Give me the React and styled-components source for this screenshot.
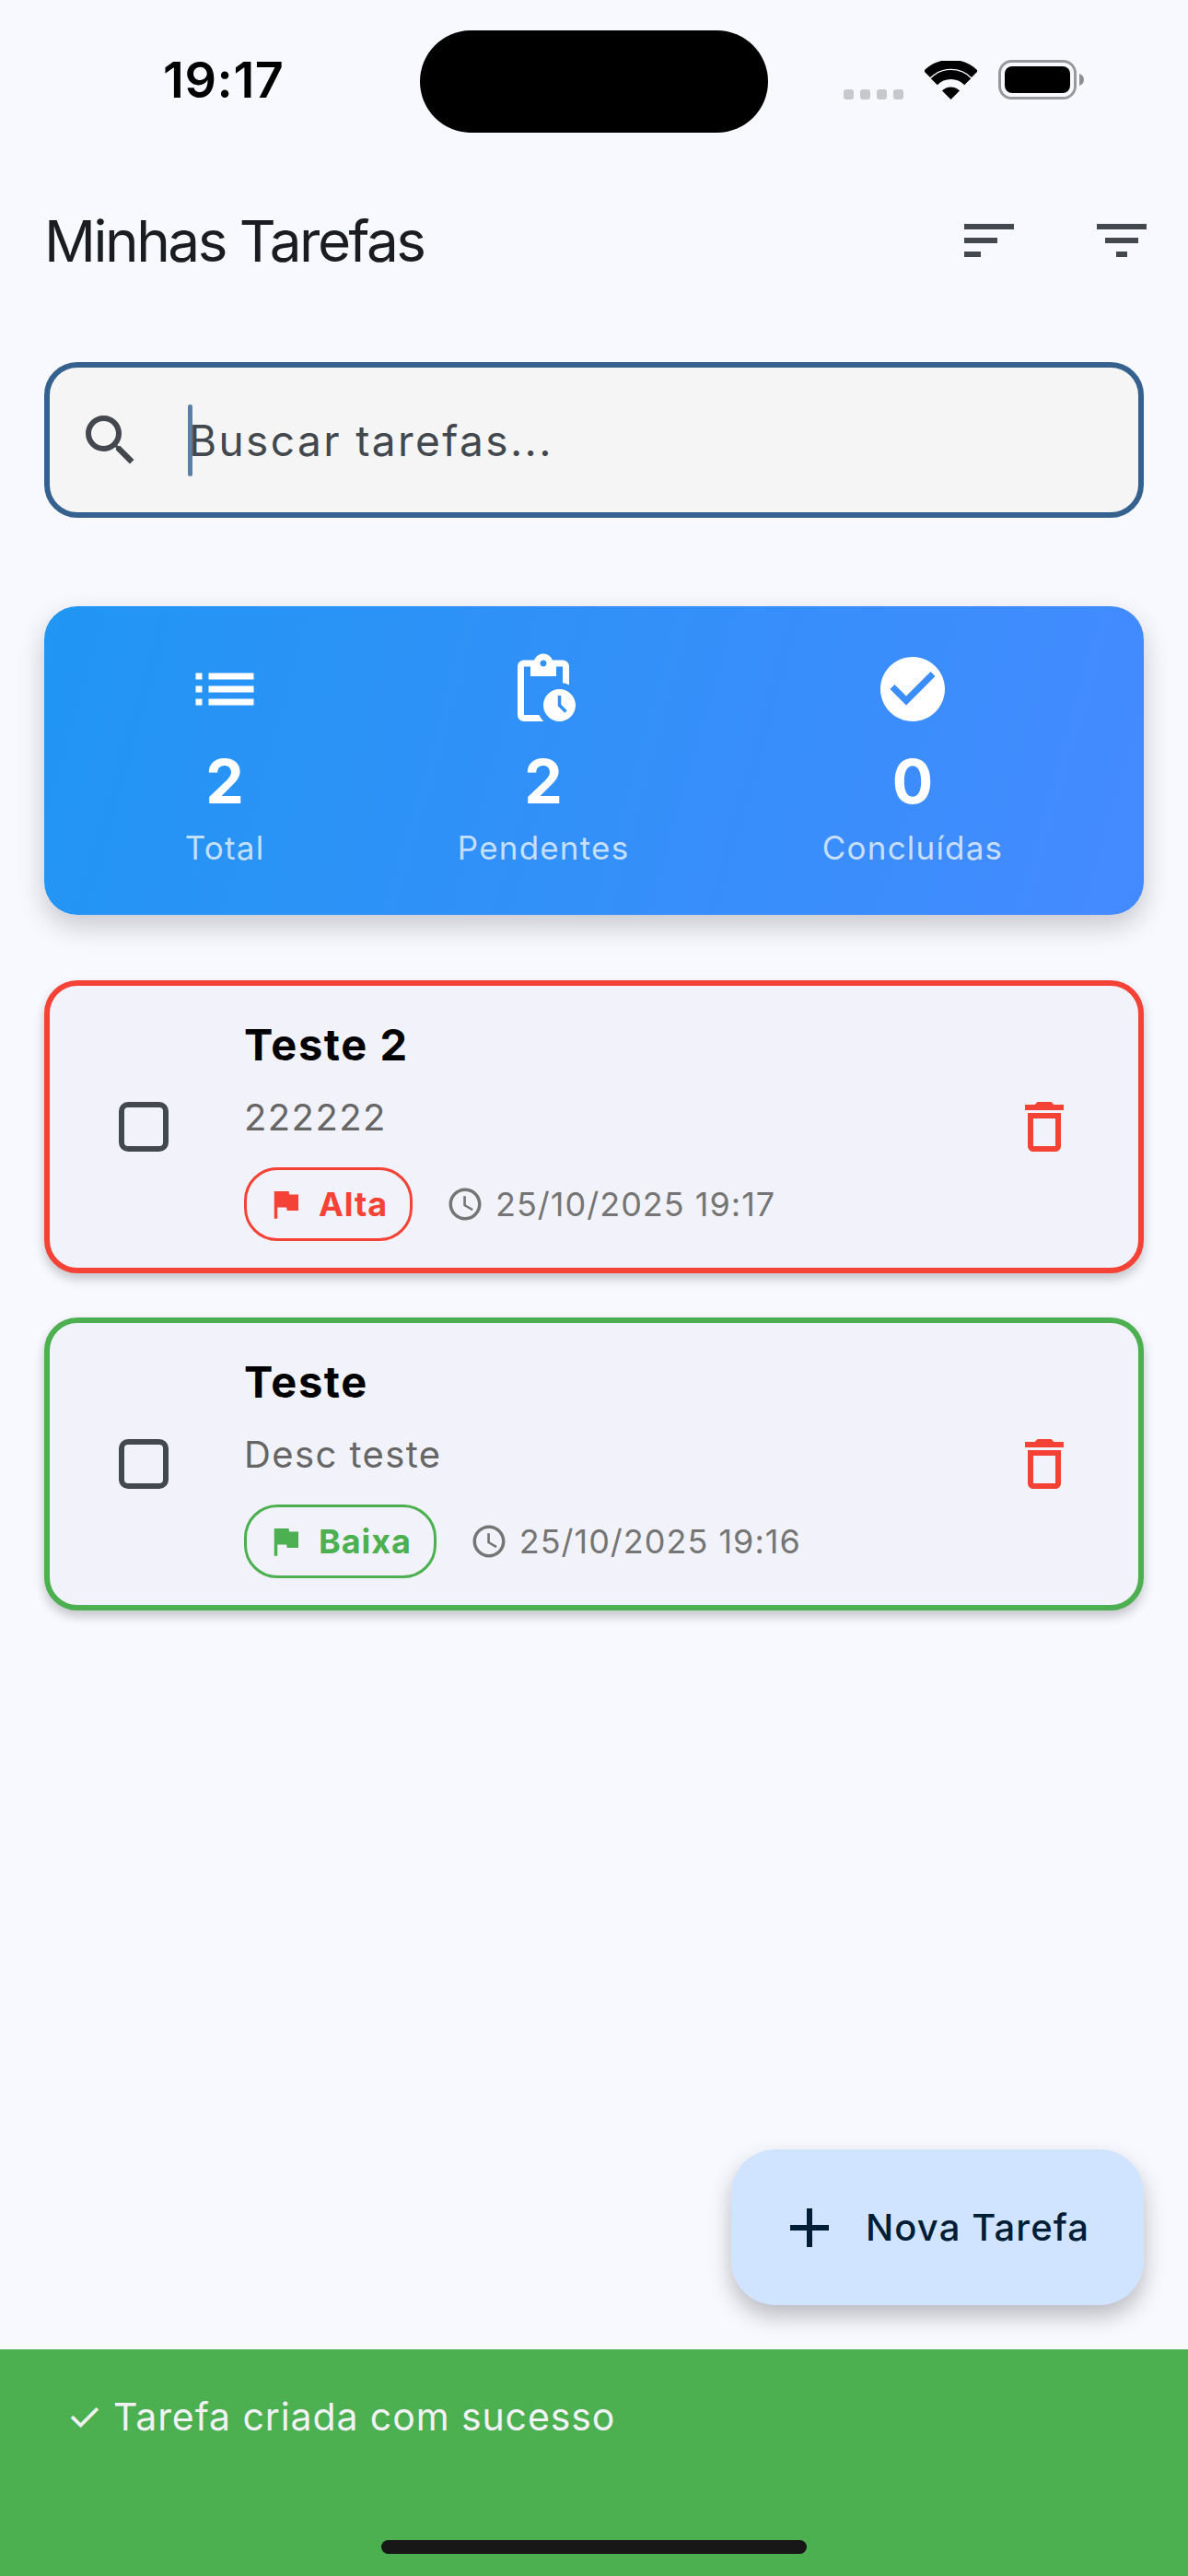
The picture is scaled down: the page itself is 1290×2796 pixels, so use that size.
import React from "react";
import styled, { createGlobalStyle } from "styled-components";
import {
  MdSearch, MdSort, MdFilterList, MdList, MdPendingActions, MdCheckCircle,
  MdDeleteOutline, MdFlag, MdAccessTime, MdAdd,
} from "react-icons/md";

const Global = createGlobalStyle`
  html, body { margin: 0; padding: 0; background: #f8f9ff; }
  body { font-family: Inter, "Noto Sans", sans-serif; overflow: hidden; }
`;

const Page = styled.div`
  width: 1290px;
  height: 2796px;
  display: flex;
  flex-direction: column;
  background: #f8f9ff;
`;
const StatusBar = styled.div`
  display: flex;
  align-items: flex-start;
  padding-top: 33px;
`;
const TimeZone = styled.div`
  width: 456px;
  box-sizing: border-box;
  padding: 27px 0 0 177px;
  font-size: 54px;
  line-height: 54px;
  font-weight: 600;
  letter-spacing: 0.6px;
  color: #000;
`;
const Notch = styled.div`
  width: 378px;
  height: 111px;
  border-radius: 56px;
  background: #000;
`;
const StatusRight = styled.div`
  display: flex;
  align-items: flex-end;
  padding: 32px 0 0 82px;
`;
const Signal = styled.div`
  display: flex;
  gap: 7px;
  margin-right: 23px;
`;
const SignalDot = styled.span`
  width: 11px;
  height: 11px;
  border-radius: 3px;
  background: #c7c7cc;
`;
const Main = styled.div`
  flex: 1;
  display: flex;
  flex-direction: column;
  padding: 0 48px;
`;
const Header = styled.div`
  display: flex;
  align-items: center;
  justify-content: space-between;
  margin-top: 81px;
  height: 72px;
`;
const Title = styled.div`
  font-size: 62px;
  font-weight: 400;
  letter-spacing: -2.5px;
  color: #191c20;
`;
const HeaderIcons = styled.div`
  display: flex;
  gap: 72px;
  margin-right: -12px;
  color: #43474e;
  font-size: 72px;
  svg { display: block; }
`;
const Search = styled.div`
  margin-top: 96px;
  height: 169px;
  box-sizing: border-box;
  border: 6px solid #35618f;
  border-radius: 36px;
  background: #f5f5f5;
  display: flex;
  align-items: center;
  padding-left: 30px;
  color: #43474e;
  svg { display: block; }
`;
const Caret = styled.div`
  width: 5px;
  height: 78px;
  border-radius: 3px;
  background: #5a80a8;
  margin-left: 48px;
`;
const Placeholder = styled.div`
  font-size: 46px;
  letter-spacing: 2.4px;
  color: #43474e;
  margin-left: -4px;
`;
const StatsCard = styled.div`
  margin-top: 96px;
  padding: 48px;
  border-radius: 36px;
  background: linear-gradient(105.8deg, #2196f3, #448aff);
  box-shadow: 0 12px 30px rgba(0, 0, 0, 0.2);
  display: flex;
  justify-content: space-around;
  color: #fff;
`;
const Stat = styled.div`
  display: flex;
  flex-direction: column;
  align-items: center;
  svg { display: block; }
`;
const StatValue = styled.div`
  margin-top: 18px;
  font-size: 66px;
  line-height: 80px;
  font-weight: 700;
`;
const StatLabel = styled.div`
  margin-top: 10px;
  margin-bottom: 3px;
  font-size: 35px;
  line-height: 44px;
  letter-spacing: 1.2px;
  color: rgba(255, 255, 255, 0.72);
`;
const TaskList = styled.div`
  margin-top: 71px;
  display: flex;
  flex-direction: column;
  gap: 48px;
`;
const TaskCard = styled.div`
  display: flex;
  align-items: center;
  box-sizing: border-box;
  height: 318px;
  padding: 0 66px 0 48px;
  border: 6px solid ${(p) => p.$color};
  border-radius: 36px;
  background: #f2f3fa;
  box-shadow: 0 6px 12px rgba(0, 0, 0, 0.22);
`;
const CheckCell = styled.div`
  width: 108px;
  display: flex;
  justify-content: center;
  margin-right: 55px;
`;
const Check = styled.div`
  width: 54px;
  height: 54px;
  box-sizing: border-box;
  border: 6px solid #43474e;
  border-radius: 10px;
`;
const TaskBody = styled.div`
  flex: 1;
  display: flex;
  flex-direction: column;
  padding-top: 5px;
`;
const TaskTitle = styled.div`
  font-size: 47px;
  line-height: 60px;
  font-weight: 700;
  letter-spacing: 1.6px;
  color: #000;
`;
const TaskDesc = styled.div`
  margin-top: 19px;
  font-size: 40px;
  line-height: 60px;
  letter-spacing: 1.4px;
  color: #666;
`;
const Meta = styled.div`
  margin-top: 24px;
  display: flex;
  align-items: center;
`;
const Chip = styled.div`
  height: 80px;
  box-sizing: border-box;
  border: 3px solid ${(p) => p.$color};
  border-radius: 36px;
  display: flex;
  align-items: center;
  gap: 15px;
  padding: 0 24px 0 21px;
  color: ${(p) => p.$color};
  font-size: 36px;
  font-weight: 700;
  letter-spacing: 0.9px;
  svg { display: block; }
`;
const DateRow = styled.div`
  margin-left: 36px;
  display: flex;
  align-items: center;
  gap: 12px;
  font-size: 36px;
  letter-spacing: 1px;
  color: #757575;
  svg { display: block; }
`;
const DeleteBtn = styled.div`
  color: #f44336;
  font-size: 72px;
  svg { display: block; }
`;
const Fab = styled.div`
  margin-top: auto;
  margin-bottom: 48px;
  align-self: flex-end;
  width: 448px;
  height: 169px;
  box-sizing: border-box;
  padding-left: 49px;
  border-radius: 48px;
  background: #d1e4ff;
  box-shadow: 0 12px 24px rgba(0, 0, 0, 0.25);
  display: flex;
  align-items: center;
  gap: 25px;
  color: #001d36;
  font-size: 40px;
  font-weight: 500;
  letter-spacing: 1.1px;
  svg { display: block; }
`;
const Snackbar = styled.div`
  height: 246px;
  box-sizing: border-box;
  background: #4caf50;
  padding: 43px 0 0 72px;
  display: flex;
  flex-direction: column;
  color: #f0f2f5;
  font-size: 41px;
  line-height: 60px;
  letter-spacing: 0.9px;
`;
const SnackText = styled.div`
  display: flex;
  gap: 12px;
`;
const Tick = styled.span`
  font-size: 44px;
  letter-spacing: 0;
`;
const HomeBar = styled.div`
  align-self: center;
  width: 462px;
  height: 15px;
  margin: 104px 72px 0 0;
  border-radius: 8px;
  background: #171717;
`;

const Wifi = () => (
  <svg width="57" height="42" viewBox="0 0 57 42">
    <path d="M2.5 14.5 A37 37 0 0 1 54.5 14.5" fill="none" stroke="#000" strokeWidth="10" />
    <path d="M10.3 22.7 A25.5 25.5 0 0 1 46.7 22.7" fill="none" stroke="#000" strokeWidth="10" />
    <path d="M19 32.5 A13.5 13.5 0 0 1 38 32.5 L28.5 42 Z" fill="#000" />
  </svg>
);
const Battery = () => (
  <svg width="93" height="43" viewBox="0 0 93 43" style={{ marginLeft: 23 }}>
    <rect x="1.5" y="1.5" width="82" height="40" rx="13" fill="none" stroke="#98989d" strokeWidth="3" />
    <rect x="7" y="7" width="71" height="29" rx="8" fill="#000" />
    <path d="M88 15 C91 16 93 18 93 21.5 C93 25 91 27 88 28 Z" fill="#8e8e93" />
  </svg>
);

const tasks = [
  { title: "Teste 2", desc: "222222", prio: "Alta", color: "#f44336", date: "25/10/2025 19:17" },
  { title: "Teste", desc: "Desc teste", prio: "Baixa", color: "#4caf50", date: "25/10/2025 19:16" },
];

function TaskItem({ task }) {
  return (
    <TaskCard $color={task.color}>
      <CheckCell><Check /></CheckCell>
      <TaskBody>
        <TaskTitle>{task.title}</TaskTitle>
        <TaskDesc>{task.desc}</TaskDesc>
        <Meta>
          <Chip $color={task.color}><MdFlag size={42} />{task.prio}</Chip>
          <DateRow><MdAccessTime size={42} />{task.date}</DateRow>
        </Meta>
      </TaskBody>
      <DeleteBtn><MdDeleteOutline /></DeleteBtn>
    </TaskCard>
  );
}

export default function App() {
  return (
    <Page>
      <Global />
      <StatusBar>
        <TimeZone>19:17</TimeZone>
        <Notch />
        <StatusRight>
          <Signal><SignalDot /><SignalDot /><SignalDot /><SignalDot /></Signal>
          <Wifi />
          <Battery />
        </StatusRight>
      </StatusBar>
      <Main>
        <Header>
          <Title>Minhas Tarefas</Title>
          <HeaderIcons><MdSort /><MdFilterList /></HeaderIcons>
        </Header>
        <Search>
          <MdSearch size={72} />
          <Caret />
          <Placeholder>Buscar tarefas...</Placeholder>
        </Search>
        <StatsCard>
          <Stat><MdList size={84} /><StatValue>2</StatValue><StatLabel>Total</StatLabel></Stat>
          <Stat><MdPendingActions size={84} /><StatValue>2</StatValue><StatLabel>Pendentes</StatLabel></Stat>
          <Stat><MdCheckCircle size={84} /><StatValue>0</StatValue><StatLabel>Concluídas</StatLabel></Stat>
        </StatsCard>
        <TaskList>
          {tasks.map((t) => <TaskItem key={t.title} task={t} />)}
        </TaskList>
        <Fab><MdAdd size={72} />Nova Tarefa</Fab>
      </Main>
      <Snackbar>
        <SnackText><Tick>✓</Tick>Tarefa criada com sucesso</SnackText>
        <HomeBar />
      </Snackbar>
    </Page>
  );
}
